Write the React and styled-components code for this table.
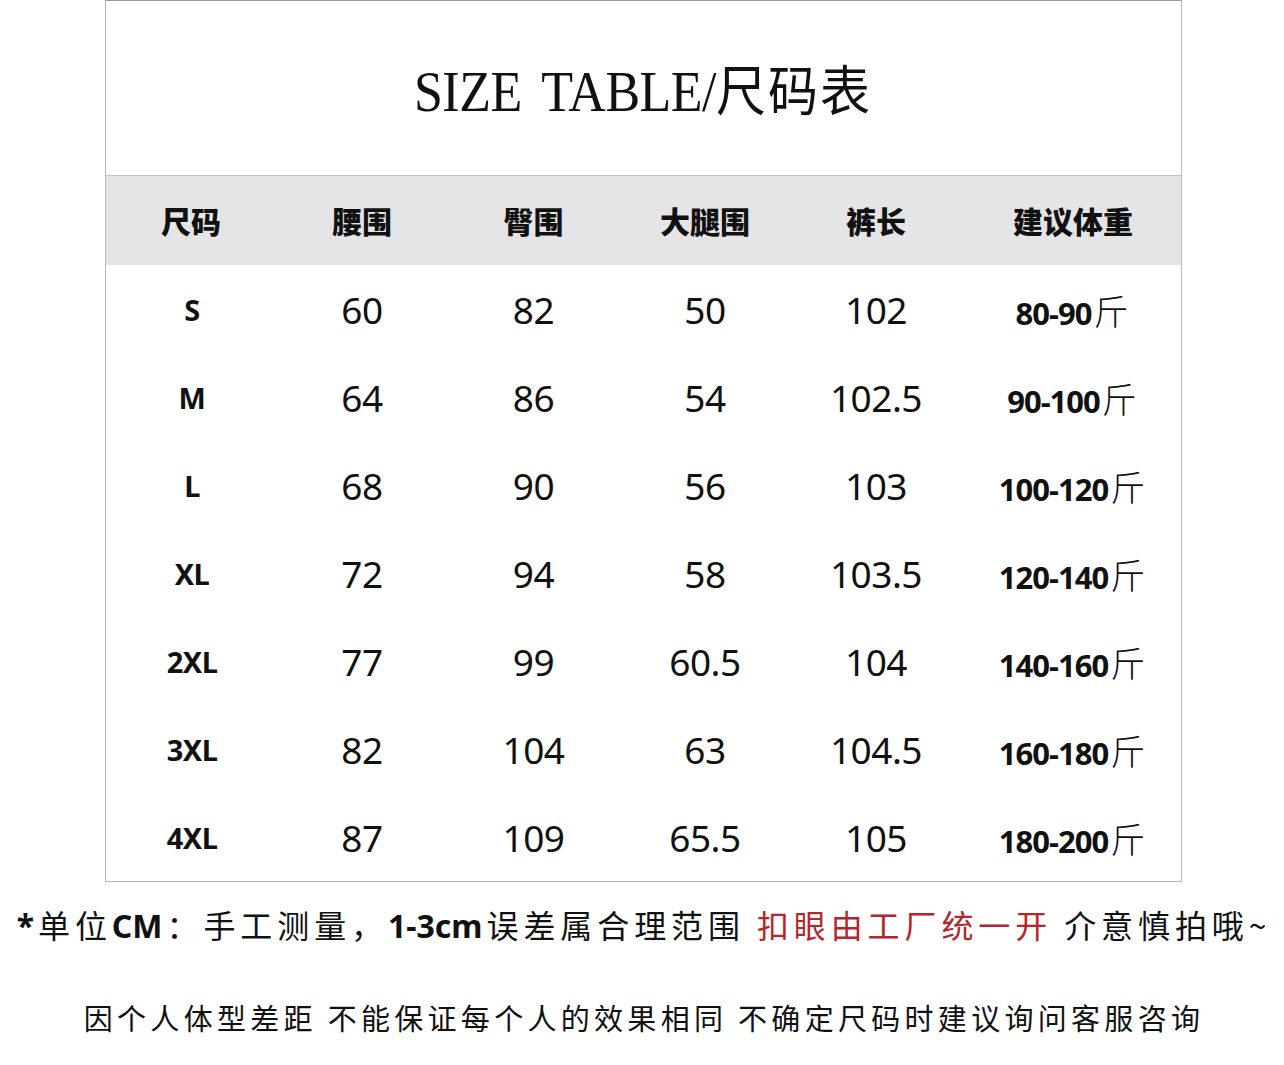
import React from 'react'
import styled, { createGlobalStyle } from "styled-components";

const Global = createGlobalStyle`
    html, body {
        margin: 0;
        padding: 0;
        background: #fff;
    }
`;

const Page = styled.div`
    width: 1284px;
    height: 1065px;
    display: flex;
    flex-direction: column;
    align-items: center;
    background: #fff;
    color: #111;
    overflow: hidden;
`;

const Table = styled.div`
    width: 1075px;
    margin-left: 2px;
    border: 1px solid #b9b9b9;
    border-top-color: #9a9a9a;
    display: flex;
    flex-direction: column;
`;

const Title = styled.div`
    height: 175px;
    display: flex;
    align-items: center;
    justify-content: center;
    border-bottom: 1px solid #c4c4c4;
    box-sizing: border-box;
`;

const TitleText = styled.div`
    font-family: "Liberation Serif", "Noto Sans CJK SC", serif;
    font-size: 52px;
    letter-spacing: -0.5px;
    word-spacing: 8px;
    transform: scaleY(1.08);
    margin-bottom: 2px;

    span {
        font-family: "Noto Sans CJK SC", sans-serif;
        font-weight: 400;
        font-size: 50px;
        letter-spacing: 2px;
    }
`;

const Row = styled.div`
    display: grid;
    grid-template-columns: 171px 171px 172px 171px 171px 1fr;
    height: ${p => p.$h}px;
    align-items: center;
    background: ${p => p.$head ? "#e5e5e7" : "#fff"};
`;

const HeadCell = styled.div`
    text-align: center;
    font-family: "Noto Sans CJK SC", sans-serif;
    font-weight: 900;
    font-size: 30px;
    padding-left: ${p => p.$pad || 0}px;
    padding-bottom: 2px;
`;

const SizeCell = styled.div`
    text-align: center;
    font-family: "Noto Sans", "Liberation Sans", sans-serif;
    font-weight: 700;
    font-size: 29px;
    letter-spacing: -0.5px;
    padding-left: 2px;
`;

const NumCell = styled.div`
    text-align: center;
    font-family: "Noto Sans", "Liberation Sans", sans-serif;
    font-weight: 400;
    font-size: 37px;
    letter-spacing: -0.5px;
`;

const WeightCell = styled.div`
    text-align: center;
    font-family: "Noto Sans", "Liberation Sans", sans-serif;
    font-weight: 700;
    font-size: 31px;
    letter-spacing: -1px;
    padding-left: 2px;

    span {
        font-family: "Noto Sans CJK SC", sans-serif;
        font-weight: 300;
        font-size: 35px;
        letter-spacing: 0;
        margin-left: 2px;
    }
`;

const Note = styled.div`
    margin-top: ${p => p.$top}px;
    font-family: "Noto Sans CJK SC", sans-serif;
    font-weight: 400;
    font-size: ${p => p.$size}px;
    letter-spacing: ${p => p.$ls}px;
    white-space: pre;
    line-height: 1.3;
    color: #111;
    margin-left: 4px;
`;

const Latin = styled.span`
    font-family: "Noto Sans", "Liberation Sans", sans-serif;
    font-weight: 700;
    letter-spacing: 0;
    margin-right: 4px;
`;

const Red = styled.span`
    color: #b3262b;
`;

const heads = [
    { t: "尺码" }, { t: "腰围" }, { t: "臀围" }, { t: "大腿围" }, { t: "裤长" }, { t: "建议体重", pad: 4 },
];

const rows = [
    ["S", "60", "82", "50", "102", "80-90"],
    ["M", "64", "86", "54", "102.5", "90-100"],
    ["L", "68", "90", "56", "103", "100-120"],
    ["XL", "72", "94", "58", "103.5", "120-140"],
    ["2XL", "77", "99", "60.5", "104", "140-160"],
    ["3XL", "82", "104", "63", "104.5", "160-180"],
    ["4XL", "87", "109", "65.5", "105", "180-200"],
];

export default function App() {
    return (
        <Page>
            <Global />
            <Table>
                <Title><TitleText>SIZE TABLE/<span>尺码表</span></TitleText></Title>
                <Row $head $h={89}>
                    {heads.map(h => <HeadCell key={h.t} $pad={h.pad}>{h.t}</HeadCell>)}
                </Row>
                {rows.map(r => (
                    <Row key={r[0]} $h={88}>
                        <SizeCell>{r[0]}</SizeCell>
                        <NumCell>{r[1]}</NumCell>
                        <NumCell>{r[2]}</NumCell>
                        <NumCell>{r[3]}</NumCell>
                        <NumCell>{r[4]}</NumCell>
                        <WeightCell>{r[5]}<span>斤</span></WeightCell>
                    </Row>
                ))}
            </Table>
            <Note $top={22} $size={32} $ls={4.9}>
                <Latin>*</Latin>单位<Latin>CM</Latin>：手工测量，<Latin>1-3cm</Latin>误差属合理范围 <Red>扣眼由工厂统一开</Red> 介意慎拍哦~
            </Note>
            <Note $top={52} $size={29} $ls={4.3}>
                因个人体型差距 不能保证每个人的效果相同 不确定尺码时建议询问客服咨询
            </Note>
        </Page>
    )
}
